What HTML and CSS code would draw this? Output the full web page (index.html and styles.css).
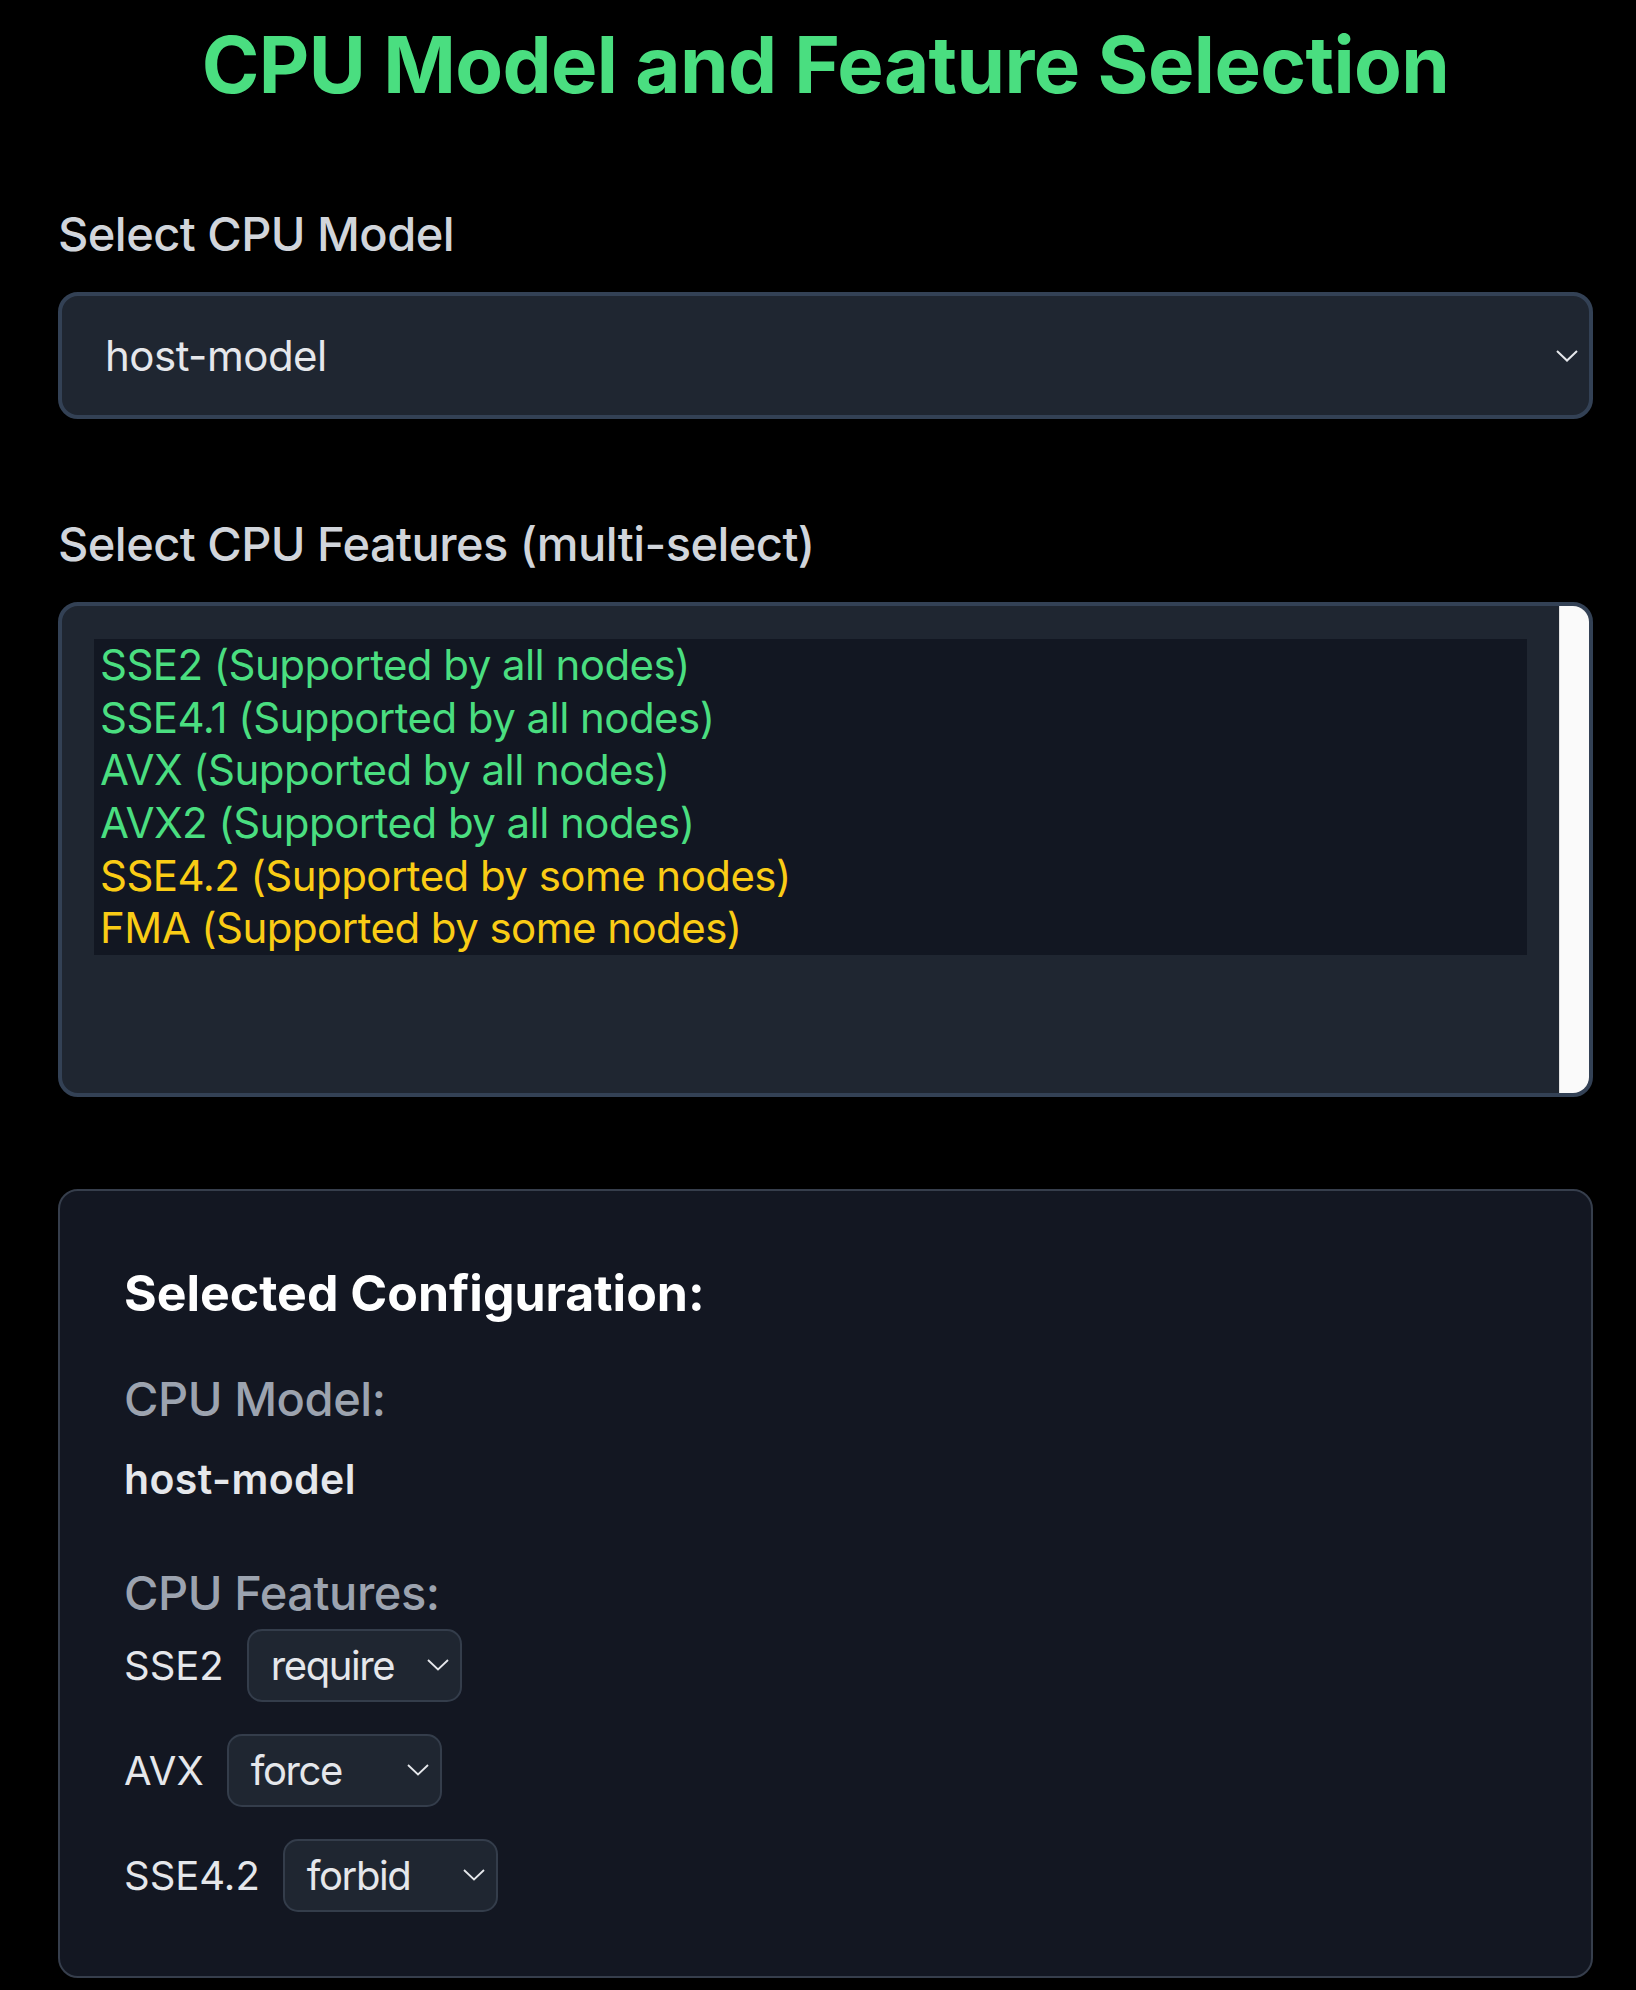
FILE: index.html
```html
<!DOCTYPE html>
<html lang="en">
<head>
<meta charset="utf-8">
<title>CPU Model and Feature Selection</title>
<link rel="stylesheet" href="styles.css">
</head>
<body>
<main class="page">
  <h1 class="title">CPU Model and Feature Selection</h1>

  <div class="field-label first">Select CPU Model</div>
  <div class="select-lg" role="combobox" aria-expanded="false">
    <span>host-model</span>
    <svg class="chev-lg" width="22" height="12" viewBox="0 0 22 12" aria-hidden="true"><polyline points="1,1 11,10.5 21,1" fill="none" stroke="#e5e7eb" stroke-width="2"/></svg>
  </div>

  <div class="field-label second">Select CPU Features (multi-select)</div>
  <div class="listbox" role="listbox" aria-multiselectable="true">
    <div class="list-inner">
      <div class="options">
        <div class="opt all" role="option">SSE2 (Supported by all nodes)</div>
        <div class="opt all" role="option">SSE4.1 (Supported by all nodes)</div>
        <div class="opt all" role="option">AVX (Supported by all nodes)</div>
        <div class="opt all" role="option">AVX2 (Supported by all nodes)</div>
        <div class="opt some" role="option">SSE4.2 (Supported by some nodes)</div>
        <div class="opt some" role="option">FMA (Supported by some nodes)</div>
      </div>
    </div>
    <div class="scrolltrack"></div>
  </div>

  <section class="panel">
    <h2 class="panel-title">Selected Configuration:</h2>
    <div class="cfg-label">CPU Model:</div>
    <div class="cfg-value">host-model</div>
    <div class="cfg-label features">CPU Features:</div>
    <div class="feature-rows">
      <div class="feature-row">
        <span>SSE2</span>
        <div class="select-sm"><span>require</span><svg width="22" height="12" viewBox="0 0 22 12" aria-hidden="true"><polyline points="1,1 11,10.5 21,1" fill="none" stroke="#e5e7eb" stroke-width="1.8"/></svg></div>
      </div>
      <div class="feature-row">
        <span>AVX</span>
        <div class="select-sm"><span>force</span><svg width="22" height="12" viewBox="0 0 22 12" aria-hidden="true"><polyline points="1,1 11,10.5 21,1" fill="none" stroke="#e5e7eb" stroke-width="1.8"/></svg></div>
      </div>
      <div class="feature-row">
        <span>SSE4.2</span>
        <div class="select-sm"><span>forbid</span><svg width="22" height="12" viewBox="0 0 22 12" aria-hidden="true"><polyline points="1,1 11,10.5 21,1" fill="none" stroke="#e5e7eb" stroke-width="1.8"/></svg></div>
      </div>
    </div>
  </section>
</main>
</body>
</html>
```

FILE: styles.css
```css
html, body {
  margin: 0;
  background: #000;
}
body {
  font-family: Inter, "Noto Sans", "Liberation Sans", sans-serif;
  color: #e5e7eb;
}
.page {
  width: 1535px;
  margin-left: 58px;
  padding-top: 18px;
  padding-bottom: 10px;
}
.title {
  margin: 0;
  font-size: 78px;
  line-height: 94px;
  font-weight: 700;
  color: #4ade80;
  text-align: center;
  letter-spacing: -0.6px;
}
.field-label {
  font-size: 47px;
  line-height: 73px;
  font-weight: 500;
  color: #d1d5db;
  letter-spacing: -0.55px;
}
.field-label.first {
  margin: 85px 0 22px;
}
.field-label.second {
  margin: 88px 0 22px;
}
.select-lg {
  box-sizing: border-box;
  height: 127px;
  border: 4px solid #334155;
  border-radius: 20px;
  background: #1f2631;
  display: flex;
  align-items: center;
  justify-content: space-between;
  padding: 0 11px 0 43px;
  font-size: 42px;
  letter-spacing: -0.5px;
  color: #e5e7eb;
}
.listbox {
  box-sizing: border-box;
  height: 495px;
  border: 4px solid #334155;
  border-radius: 20px;
  background: #1f2631;
  display: flex;
  overflow: hidden;
}
.list-inner {
  flex: 1;
  padding: 33px 32px 0 32px;
}
.options {
  background: #121722;
}
.opt {
  height: 52.67px;
  line-height: 52.67px;
  padding-left: 6px;
  font-size: 42px;
  letter-spacing: -0.55px;
  white-space: nowrap;
}
.opt.all { color: #4ade80; }
.opt.some { color: #facc15; }
.scrolltrack {
  width: 29px;
  background: #fafafa;
  border-left: 1px solid #e2e2e2;
}
.panel {
  margin-top: 92px;
  border: 2px solid #363e4c;
  border-radius: 20px;
  background: #131722;
  padding: 66px 64px 64px 64px;
}
.panel-title {
  margin: 0 0 32px;
  font-size: 50px;
  line-height: 73px;
  font-weight: 700;
  color: #ffffff;
}
.cfg-label {
  font-size: 47px;
  line-height: 73px;
  font-weight: 500;
  color: #9ca3af;
  letter-spacing: -0.45px;
  margin-bottom: 12.5px;
}
.cfg-label.features {
  margin-bottom: 0;
}
.cfg-value {
  font-size: 41px;
  line-height: 62px;
  font-weight: 600;
  color: #e5e7eb;
  letter-spacing: 0.4px;
  margin-bottom: 46px;
}
.feature-rows {
  display: flex;
  flex-direction: column;
  gap: 32px;
}
.feature-row {
  display: flex;
  align-items: center;
  gap: 23px;
  font-size: 40px;
  color: #e5e7eb;
}
.select-sm {
  box-sizing: border-box;
  width: 215px;
  height: 73px;
  border: 2px solid #343d4b;
  border-radius: 15px;
  background: #1f2631;
  display: flex;
  align-items: center;
  justify-content: space-between;
  padding: 0 11px 0 22px;
  font-size: 40px;
  letter-spacing: -1.4px;
  color: #e5e7eb;
}
```
